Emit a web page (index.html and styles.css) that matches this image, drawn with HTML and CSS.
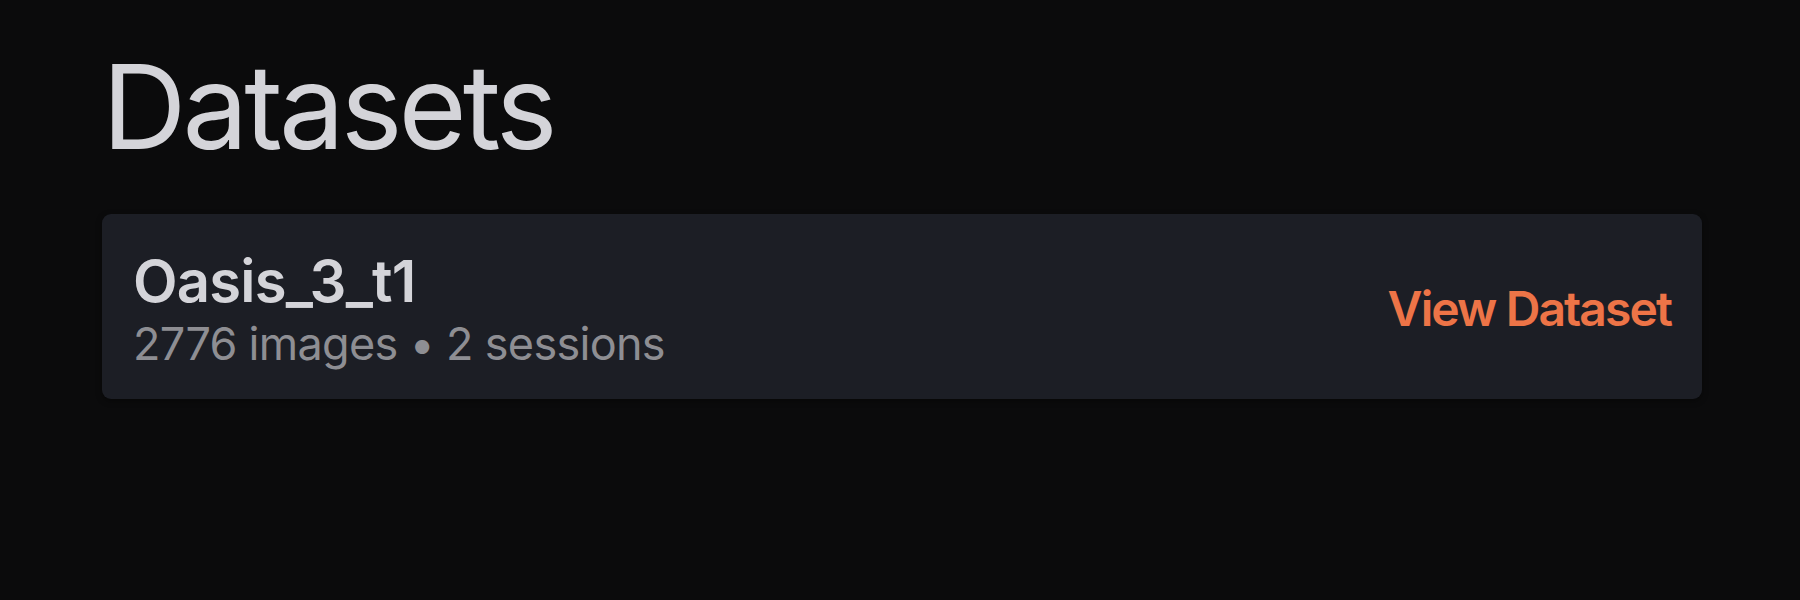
FILE: index.html
```html
<!DOCTYPE html>
<html lang="en">
<head>
<meta charset="utf-8">
<title>Datasets</title>
<link rel="stylesheet" href="styles.css">
</head>
<body>
<main class="page">
  <h1 class="page-title">Datasets</h1>
  <div class="dataset-list">
    <div class="dataset-card">
      <div class="dataset-info">
        <div class="dataset-name">Oasis_3_t1</div>
        <div class="dataset-meta">2776 images • 2 sessions</div>
      </div>
      <a class="dataset-link" href="#">View Dataset</a>
    </div>
  </div>
</main>
</body>
</html>
```

FILE: styles.css
```css
html, body {
  margin: 0;
  padding: 0;
  background: #0b0b0c;
  height: 100%;
}

body {
  font-family: Inter, "Noto Sans", sans-serif;
  color: #d4d4d9;
}

.page {
  padding: 48px 98px 0 102px;
}

.page-title {
  margin: 0;
  font-size: 117px;
  line-height: 117px;
  font-weight: 400;
  color: #d4d4d9;
  letter-spacing: -4px;
}

.dataset-list {
  margin-top: 49px;
  display: flex;
  flex-direction: column;
}

.dataset-card {
  display: flex;
  align-items: center;
  justify-content: space-between;
  background: #1c1e25;
  border-radius: 9px;
  padding: 33px 31px 28px 31px;
  box-shadow: 0 2px 6px rgba(0, 0, 0, 0.4);
}

.dataset-info {
  display: flex;
  flex-direction: column;
}

.dataset-name {
  font-size: 58px;
  line-height: 1.2;
  font-weight: 600;
  color: #d4d4d9;
  letter-spacing: -0.8px;
}

.dataset-meta {
  font-size: 45px;
  line-height: 1.2;
  font-weight: 400;
  color: #8e8e93;
  letter-spacing: -0.7px;
}

.dataset-link {
  font-size: 48px;
  line-height: 1.2;
  font-weight: 600;
  color: #ed7447;
  text-decoration: none;
  letter-spacing: -1.9px;
}
```
